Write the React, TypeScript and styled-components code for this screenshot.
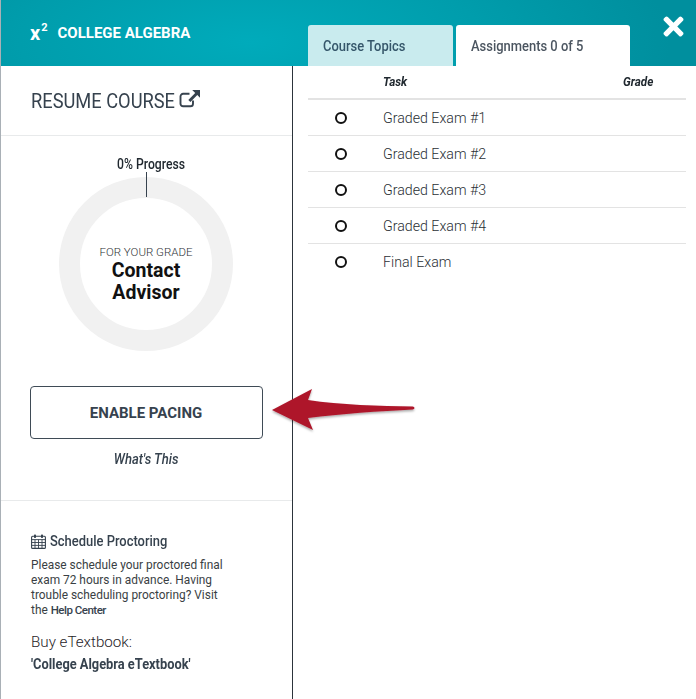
import React from "react";
import styled, { createGlobalStyle } from "styled-components";
import { FaTimes } from "react-icons/fa";

const tasks = ["Graded Exam #1", "Graded Exam #2", "Graded Exam #3", "Graded Exam #4", "Final Exam"];

export default function App() {
  return (
    <Page>
      <GlobalStyle />
      <Header>
        <Brand>
          <BrandMark>
            x<sup>2</sup>
          </BrandMark>
          <BrandName>COLLEGE ALGEBRA</BrandName>
        </Brand>
        <Tabs>
          <Tab>
            <Narrow>Course Topics</Narrow>
          </Tab>
          <Tab $active>
            <Narrow>Assignments 0 of 5</Narrow>
          </Tab>
        </Tabs>
        <CloseButton>
          <FaTimes size={29} />
        </CloseButton>
      </Header>
      <Body>
        <Sidebar>
          <ResumeSection>
            <ResumeText>RESUME COURSE</ResumeText>
            <ExternalIcon />
          </ResumeSection>
          <ProgressSection>
            <ProgressLabel>0% Progress</ProgressLabel>
            <Ring>
              <RingTick />
              <RingCaption>FOR YOUR GRADE</RingCaption>
              <RingValue>
                Contact
                <br />
                Advisor
              </RingValue>
            </Ring>
            <PacingButton>ENABLE PACING</PacingButton>
            <WhatsThis>What's This</WhatsThis>
          </ProgressSection>
          <InfoSection>
            <InfoTitle>
              <CalendarIcon />
              <Narrow>Schedule Proctoring</Narrow>
            </InfoTitle>
            <InfoText>
              Please schedule your proctored final exam 72 hours in advance. Having trouble scheduling proctoring? Visit
              the <HelpLink>Help Center</HelpLink>
            </InfoText>
            <BuyTitle>Buy eTextbook:</BuyTitle>
            <BookLink>'College Algebra eTextbook'</BookLink>
          </InfoSection>
        </Sidebar>
        <Main>
          <TableHead>
            <span />
            <HeadCell>Task</HeadCell>
            <HeadCell>Grade</HeadCell>
          </TableHead>
          {tasks.map((task, i) => (
            <TaskRow key={task} $last={i === tasks.length - 1}>
              <StatusDot />
              <TaskName>{task}</TaskName>
            </TaskRow>
          ))}
        </Main>
      </Body>
      <Arrow />
    </Page>
  );
}

function ExternalIcon() {
  return (
    <IconSvg width="22" height="20" viewBox="0 0 22 20">
      <path
        d="M14 11.5v3.2a2.6 2.6 0 0 1-2.6 2.6H4.1a2.6 2.6 0 0 1-2.6-2.6V7.4a2.6 2.6 0 0 1 2.6-2.6h6.4"
        fill="none"
        stroke="#36424e"
        strokeWidth="1.9"
      />
      <path d="M13.2 1h7.8v7.8l-2.7-2.7-6.9 6.9-2.1-2.1 6.9-6.9z" fill="#36424e" />
    </IconSvg>
  );
}

function CalendarIcon() {
  return (
    <svg width="15" height="15" viewBox="0 0 15 15">
      <rect x="0.6" y="2.2" width="13.8" height="12.2" rx="1" fill="none" stroke="#36424e" strokeWidth="1.1" />
      <path d="M0.6 5.6h13.8M0.6 8.5h13.8M0.6 11.4h13.8M4 5.6v8.8M7.5 5.6v8.8M11 5.6v8.8" stroke="#36424e" strokeWidth="0.9" />
      <rect x="3" y="0.5" width="2" height="3.4" rx="0.7" fill="#36424e" />
      <rect x="10" y="0.5" width="2" height="3.4" rx="0.7" fill="#36424e" />
    </svg>
  );
}

function Arrow() {
  return (
    <ArrowSvg width="150" height="50" viewBox="0 0 150 50">
      <defs>
        <filter id="arrowShadow" x="-10%" y="-20%" width="120%" height="150%">
          <feDropShadow dx="0" dy="1.5" stdDeviation="1.2" floodColor="#000" floodOpacity="0.35" />
        </filter>
      </defs>
      <path
        d="M2 23 L42 2 L38 13 C70 18 110 19 143 19.5 Q146 21 143 22.5 C110 24 70 27 38 31 L43 43 Z"
        fill="#ae172b"
        filter="url(#arrowShadow)"
      />
    </ArrowSvg>
  );
}

const GlobalStyle = createGlobalStyle`
  html, body {
    margin: 0;
    padding: 0;
    background: #fff;
  }
  body {
    font-family: Roboto, "Liberation Sans", sans-serif;
  }
`;

const Page = styled.div`
  position: relative;
  width: 696px;
  height: 699px;
  overflow: hidden;
  background: #fff;
  border-left: 1px solid #a9b0b6;
  box-sizing: border-box;
  display: flex;
  flex-direction: column;
`;

const Narrow = styled.span`
  display: inline-block;
  transform: scaleX(0.835);
  transform-origin: left center;
  white-space: nowrap;
`;

const Header = styled.header`
  position: relative;
  height: 66px;
  flex: none;
  display: flex;
  background: radial-gradient(ellipse 420px 150px at 250px 42px, #00abbb 0%, #009dac 55%, #008f9e 100%);
`;

const Brand = styled.div`
  width: 307px;
  flex: none;
  display: flex;
  align-items: center;
  padding: 0 0 1px 29px;
  box-sizing: border-box;
  color: #fff;
  gap: 10px;
`;

const BrandMark = styled.div`
  font-size: 20px;
  font-weight: 700;
  line-height: 1;
  sup {
    font-size: 11px;
    line-height: 0;
    position: relative;
    top: -1px;
    vertical-align: super;
    margin-left: 1px;
  }
`;

const BrandName = styled.div`
  font-size: 15px;
  font-weight: 700;
  white-space: nowrap;
`;

const Tabs = styled.div`
  display: flex;
  gap: 3px;
  align-items: flex-end;
`;

const Tab = styled.div<{ $active?: boolean }>`
  height: 41px;
  width: ${(p) => (p.$active ? "174px" : "145px")};
  box-sizing: border-box;
  padding: 12px 0 0 15px;
  border-radius: 3px 3px 0 0;
  font-size: 15.5px;
  font-weight: 500;
  line-height: 18px;
  background: ${(p) => (p.$active ? "#fff" : "#c9ebee")};
  color: ${(p) => (p.$active ? "#4b5560" : "#35566a")};
`;

const CloseButton = styled.div`
  position: absolute;
  right: 8px;
  top: 12px;
  color: #fff;
  line-height: 0;
`;

const Body = styled.div`
  flex: 1;
  display: flex;
  min-height: 0;
`;

const Sidebar = styled.aside`
  width: 292px;
  flex: none;
  box-sizing: border-box;
  border-right: 1px solid #2c343b;
  display: flex;
  flex-direction: column;
`;

const ResumeSection = styled.div`
  height: 70px;
  box-sizing: border-box;
  border-bottom: 1px solid #e8eaeb;
  padding: 1px 0 0 30px;
  display: flex;
  align-items: center;
  flex: none;
`;

const ResumeText = styled.div`
  font-size: 21px;
  color: #36424e;
  white-space: nowrap;
  transform: scaleX(0.87);
  transform-origin: left center;
  width: 148px;
`;

const IconSvg = styled.svg`
  margin-bottom: 5px;
`;

const ProgressSection = styled.div`
  height: 365px;
  flex: none;
  box-sizing: border-box;
  border-bottom: 1px solid #e8eaeb;
  display: flex;
  flex-direction: column;
  align-items: center;
  padding: 20px 1px 0 0;
`;

const ProgressLabel = styled.div`
  margin-left: 11px;
  font-size: 14px;
  font-weight: 500;
  line-height: 16px;
  color: #20282f;
  transform: scaleX(0.87);
  white-space: nowrap;
`;

const Ring = styled.div`
  position: relative;
  margin-top: 5px;
  width: 174px;
  height: 174px;
  box-sizing: border-box;
  border: 21px solid #f1f1f1;
  border-radius: 50%;
  display: flex;
  flex-direction: column;
  align-items: center;
  padding-top: 47px;
`;

const RingTick = styled.div`
  position: absolute;
  left: 50%;
  top: -26px;
  width: 1px;
  height: 25px;
  background: #36424e;
`;

const RingCaption = styled.div`
  font-size: 11.5px;
  font-weight: 300;
  line-height: 14px;
  color: #2f3438;
  white-space: nowrap;
`;

const RingValue = styled.div`
  margin-top: 1px;
  font-size: 19.5px;
  font-weight: 700;
  line-height: 22px;
  text-align: center;
  color: #111;
`;

const PacingButton = styled.div`
  margin-top: 35px;
  width: 233px;
  height: 53px;
  box-sizing: border-box;
  border: 1px solid #3f4b56;
  border-radius: 4px;
  display: flex;
  align-items: center;
  justify-content: center;
  font-size: 15px;
  font-weight: 700;
  color: #36424e;
  white-space: nowrap;
`;

const WhatsThis = styled.div`
  margin-top: 11px;
  font-size: 15px;
  font-weight: 500;
  line-height: 18px;
  font-style: italic;
  color: #36424e;
  transform: scaleX(0.87);
  white-space: nowrap;
`;

const InfoSection = styled.div`
  padding: 31px 0 0 30px;
`;

const InfoTitle = styled.div`
  display: flex;
  align-items: center;
  gap: 4px;
  font-size: 15.5px;
  font-weight: 500;
  line-height: 18px;
  color: #36424e;
`;

const InfoText = styled.div`
  margin-top: 8px;
  width: 200px;
  font-size: 11.9px;
  line-height: 15px;
  color: #3a3f44;
`;

const HelpLink = styled.span`
  font-size: 11.5px;
  font-weight: 500;
  color: #36424e;
  letter-spacing: -0.5px;
`;

const BuyTitle = styled.div`
  margin-top: 15px;
  font-size: 15.2px;
  line-height: 18px;
  font-weight: 300;
  color: #1f2327;
`;

const BookLink = styled.div`
  margin-top: 4px;
  font-size: 15px;
  line-height: 18px;
  font-weight: 700;
  color: #36424e;
  white-space: nowrap;
  transform: scaleX(0.855);
  transform-origin: left center;
`;

const Main = styled.main`
  flex: 1;
  padding: 0 10px 0 15px;
`;

const TableHead = styled.div`
  display: grid;
  grid-template-columns: 75px 240px 1fr;
  height: 34px;
  box-sizing: border-box;
  border-bottom: 2px solid #e3e3e3;
  padding-top: 8px;
`;

const HeadCell = styled.div`
  font-size: 13px;
  line-height: 15px;
  font-weight: 700;
  font-style: italic;
  color: #20282f;
  transform: scaleX(0.9);
  transform-origin: left center;
`;

const TaskRow = styled.div<{ $last?: boolean }>`
  display: grid;
  grid-template-columns: 75px 1fr;
  align-items: center;
  height: 36px;
  box-sizing: border-box;
  border-bottom: 1px solid ${(p) => (p.$last ? "transparent" : "#e3e3e3")};
`;

const StatusDot = styled.div`
  justify-self: start;
  margin-left: 27px;
  width: 12px;
  height: 12px;
  box-sizing: border-box;
  border: 2px solid #111;
  border-radius: 50%;
`;

const TaskName = styled.div`
  font-size: 14.2px;
  font-weight: 300;
  color: #2a2f34;
`;

const ArrowSvg = styled.svg`
  position: absolute;
  left: 269px;
  top: 387px;
`;
